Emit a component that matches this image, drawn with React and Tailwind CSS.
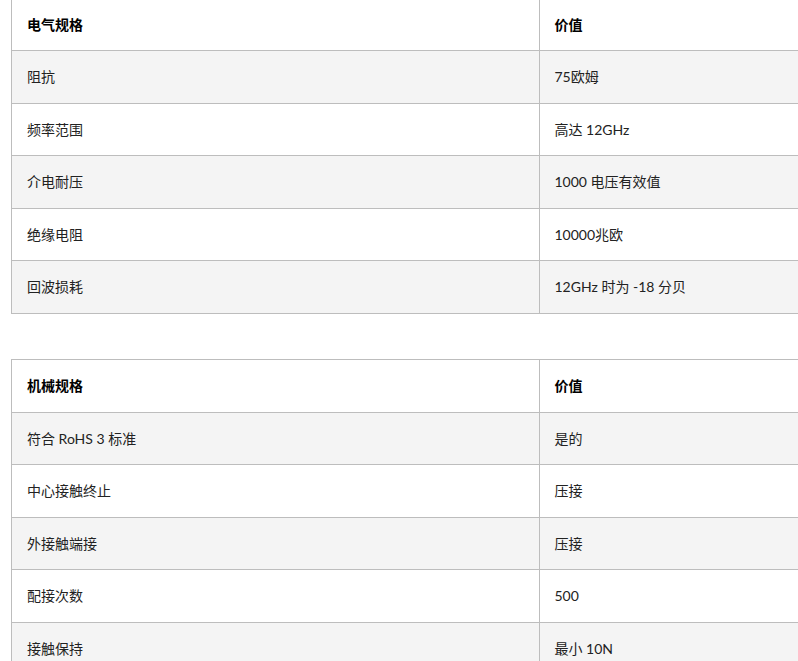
const electrical = [
  ["阻抗", "75欧姆"],
  ["频率范围", "高达 12GHz"],
  ["介电耐压", "1000 电压有效值"],
  ["绝缘电阻", "10000兆欧"],
  ["回波损耗", "12GHz 时为 -18 分贝"],
];

const mechanical = [
  ["符合 RoHS 3 标准", "是的"],
  ["中心接触终止", "压接"],
  ["外接触端接", "压接"],
  ["配接次数", "500"],
  ["接触保持", "最小 10N"],
];

function SpecTable({ title, rows }) {
  return (
    <table className="w-[1056px] border-collapse border border-[#bdbdbd] text-[14px] text-[#222]">
      <thead>
        <tr className="bg-white">
          <th className="h-[53px] w-1/2 border border-[#bdbdbd] px-[15px] text-left font-bold text-black">
            {title}
          </th>
          <th className="h-[53px] w-1/2 border border-[#bdbdbd] px-[15px] text-left font-bold text-black">
            价值
          </th>
        </tr>
      </thead>
      <tbody>
        {rows.map(([name, value], i) => (
          <tr key={name} className={i % 2 === 0 ? "bg-[#f4f4f4]" : "bg-white"}>
            <td className="h-[52.5px] border border-[#bdbdbd] px-[15px]">{name}</td>
            <td className="h-[52.5px] border border-[#bdbdbd] px-[15px]">{value}</td>
          </tr>
        ))}
      </tbody>
    </table>
  );
}

export default function App() {
  return (
    <div
      className="h-[661px] w-[798px] overflow-hidden bg-white"
      style={{ fontFamily: "Lato, 'Noto Sans CJK SC', sans-serif" }}
    >
      <div className="-mt-[3px] ml-[11px] flex flex-col gap-[45px]">
        <SpecTable title="电气规格" rows={electrical} />
        <SpecTable title="机械规格" rows={mechanical} />
      </div>
    </div>
  );
}
